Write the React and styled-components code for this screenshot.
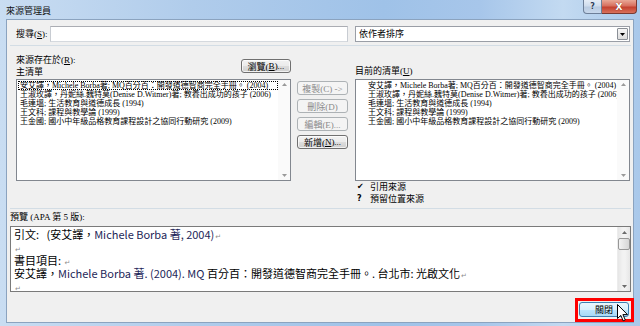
import React from "react";
import styled, { createGlobalStyle } from "styled-components";

const GlobalStyle = createGlobalStyle`
  html, body { margin: 0; padding: 0; background: #ffffff; }
  body { width: 640px; height: 326px; overflow: hidden; }
`;

const UI_FONT = `"Liberation Serif", "Noto Sans CJK TC", serif`;
const DOC_FONT = `"Noto Sans CJK TC", "Liberation Sans", sans-serif`;

const Frame = styled.div`
  position: relative;
  width: 640px;
  height: 326px;
  box-sizing: border-box;
  display: flex;
  flex-direction: column;
  padding: 0 6px 3px 6px;
  background: linear-gradient(to right, #c9ddf2 0%, #b0cceb 30%, #9fc2e8 60%, #a7c6ea 75%, #c3daf1 88%, #a9c8ea 100%);
  font-family: ${UI_FONT};
  font-size: 9px;
  color: #000;
`;

const TitleBar = styled.div`
  height: 19px;
  flex: none;
  display: flex;
  justify-content: space-between;
  align-items: flex-start;
`;

const TitleText = styled.div`
  font-family: ${DOC_FONT};
  font-size: 9px;
  line-height: 19px;
  padding-top: 1px;
  color: #111;
`;

const Caption = styled.div`
  display: flex;
  margin-right: -3px;
`;

const CaptionButton = styled.div`
  height: 14px;
  width: ${(p) => (p.$close ? "35px" : "19px")};
  box-sizing: border-box;
  display: flex;
  align-items: center;
  justify-content: center;
  border: 1px solid ${(p) => (p.$close ? "#7a3a32" : "#6d7f98")};
  border-top: none;
  border-left: ${(p) => (p.$close ? "none" : undefined)};
  border-radius: ${(p) => (p.$close ? "0 0 4px 0" : "0 0 0 4px")};
  background: ${(p) =>
    p.$close
      ? "linear-gradient(to bottom, #e9a896 0%, #d7705f 45%, #c4412f 55%, #d8715c 100%)"
      : "linear-gradient(to bottom, #e4ecf6 0%, #cfdcec 45%, #b9cbe1 55%, #c8d8ec 100%)"};
  color: ${(p) => (p.$close ? "#fff" : "#2c3d58")};
  font-family: "DejaVu Sans", sans-serif;
  font-weight: bold;
  font-size: ${(p) => (p.$close ? "9px" : "8px")};
  text-shadow: ${(p) => (p.$close ? "0 0 1px #5a1a12" : "0 0 1px #fff")};
`;

const Client = styled.div`
  flex: 1;
  display: flex;
  flex-direction: column;
  background: #f0f0f0;
  border: 1px solid #8ba3bf;
`;

const SearchRow = styled.div`
  display: flex;
  align-items: center;
  margin-top: 6px;
  padding: 0 2px 0 9px;
  height: 16px;
`;

const Label = styled.span`
  white-space: nowrap;
  line-height: 12px;
  width: ${(p) => p.$w || "auto"};
  flex: none;
`;

const TextBox = styled.div`
  width: 298px;
  height: 16px;
  box-sizing: border-box;
  background: #fff;
  border: 1px solid #abadb3;
  border-bottom-color: #d5d9de;
  border-left-color: #c8ccd2;
  border-right-color: #c8ccd2;
`;

const Combo = styled.div`
  margin-left: 7px;
  width: 275px;
  height: 16px;
  box-sizing: border-box;
  background: #fff;
  border: 1px solid #9a9ea6;
  display: flex;
  align-items: center;
  justify-content: space-between;
  padding-left: 3px;
`;

const ComboArrow = styled.div`
  width: 11px;
  height: 12px;
  margin-right: 1px;
  box-sizing: border-box;
  border: 1px solid #8a8f96;
  border-radius: 1px;
  background: linear-gradient(to bottom, #f6f6f6, #dcdcdc);
  display: flex;
  align-items: center;
  justify-content: center;
`;

const Separator = styled.div`
  height: 1px;
  margin: ${(p) => p.$top || "3px"} 2px 0 3px;
  background: #d3dde5;
  flex: none;
`;

const MainGrid = styled.div`
  display: grid;
  grid-template-columns: 275px 52px 275px;
  column-gap: 6px;
  padding: 0 2px 0 9px;
`;

const Column = styled.div`
  display: flex;
  flex-direction: column;
`;

const Header = styled.div`
  height: 33px;
  display: flex;
  justify-content: space-between;
  align-items: flex-end;
`;

const HeaderLabels = styled.div`
  display: flex;
  flex-direction: column;
  margin-bottom: ${(p) => p.$mb || "1px"};
`;

const Button = styled.div`
  width: ${(p) => p.$w || "51px"};
  height: 14px;
  box-sizing: border-box;
  display: flex;
  align-items: center;
  justify-content: center;
  border-radius: 3px;
  border: 1px solid ${(p) => (p.$disabled ? "#adb2b5" : "#707070")};
  background: ${(p) =>
    p.$disabled
      ? "#f4f4f4"
      : "linear-gradient(to bottom, #f2f2f2 0%, #ebebeb 50%, #dddddd 51%, #cfcfcf 100%)"};
  color: ${(p) => (p.$disabled ? "#8a8a8a" : "#000")};
  white-space: nowrap;
  font-size: 9px;
  margin-bottom: ${(p) => p.$mb || "0"};
  box-shadow: inset 0 0 0 1px ${(p) => (p.$disabled ? "transparent" : "rgba(255,255,255,0.7)")};
`;

const ListBox = styled.div`
  height: 102px;
  box-sizing: border-box;
  border: 1px solid #82878f;
  background: #fff;
  display: flex;
`;

const ListItems = styled.div`
  flex: 1;
  min-width: 0;
  overflow: hidden;
  padding: 1px 0 0 ${(p) => p.$indent || "1px"};
`;

const ListItem = styled.div`
  font-family: ${UI_FONT};
  font-size: 8px;
  line-height: 9px;
  height: 9px;
  white-space: nowrap;
  padding-left: 2px;
  outline: ${(p) => (p.$focus ? "1px dotted #000" : "none")};
  outline-offset: -1px;
`;

const ListScroll = styled.div`
  width: 12px;
  flex: none;
  display: flex;
  flex-direction: column;
  justify-content: space-between;
  align-items: center;
  padding: 3px 0;
  background: #fafafa;
`;

const ButtonColumn = styled.div`
  display: flex;
  flex-direction: column;
  gap: 4px;
  padding-top: 35px;
`;

const Legend = styled.div`
  display: flex;
  flex-direction: column;
  padding-left: 2px;
`;

const LegendRow = styled.div`
  display: flex;
  align-items: center;
  height: 12px;
  line-height: 12px;
  font-family: ${DOC_FONT};
`;

const LegendMark = styled.span`
  width: 13px;
  font-family: "DejaVu Sans", sans-serif;
  font-weight: bold;
  font-size: 8px;
`;

const PreviewLabel = styled.div`
  margin: 2px 0 3px 3px;
  line-height: 12px;
`;

const PreviewBox = styled.div`
  height: 66px;
  margin: 0 2px 0 3px;
  box-sizing: border-box;
  border: 1px solid #7a7a7a;
  background: #fff;
  display: flex;
`;

const PreviewText = styled.div`
  flex: 1;
  padding: 1px 0 0 3px;
  font-family: ${DOC_FONT};
  font-size: 11px;
  line-height: 13px;
  color: #000;
  overflow: hidden;
`;

const Line = styled.div`
  height: 13px;
  white-space: nowrap;
`;

const Latin = styled.span`
  color: #1d2658;
`;

const Mark = styled.span`
  color: #8c8c8c;
  font-family: "DejaVu Sans", sans-serif;
  font-size: 7px;
  line-height: 7px;
  margin-left: 1px;
`;

const VScroll = styled.div`
  width: 12px;
  flex: none;
  display: flex;
  flex-direction: column;
  background: linear-gradient(to right, #e6e6e6, #f2f2f2 40%, #f2f2f2 60%, #e6e6e6);
  border-left: 1px solid #ececec;
`;

const ScrollArrow = styled.div`
  height: 10px;
  display: flex;
  align-items: center;
  justify-content: center;
`;

const Thumb = styled.div`
  height: 12px;
  margin: 1px 0 0 0;
  box-sizing: border-box;
  border: 1px solid #979797;
  border-radius: 2px;
  background: linear-gradient(to right, #f3f3f3, #e4e4e4 50%, #d6d6d6);
`;

const Track = styled.div`
  flex: 1;
`;

const Footer = styled.div`
  display: flex;
  justify-content: flex-end;
  padding: 6px 0 0 0;
  margin-right: -1px;
`;

const Highlight = styled.div`
  border: 3px solid #ff0000;
  padding: 1px 2px 2px 1px;
`;

const CloseButton = styled.div`
  width: 50px;
  height: 15px;
  box-sizing: border-box;
  display: flex;
  align-items: center;
  justify-content: center;
  border: 1px solid #3c7fb1;
  border-radius: 3px;
  background: linear-gradient(to bottom, #eaf6fd 0%, #d9f0fc 50%, #bee6fd 51%, #a7d9f5 100%);
  font-size: 9px;
`;

const Cursor = styled.svg`
  position: absolute;
  left: 617px;
  top: 304px;
`;

const U = styled.span`
  text-decoration: underline;
`;

function Tri({ down, color = "#6b6b6b" }) {
  return (
    <svg width="5" height="3" viewBox="0 0 5 3">
      <polygon points={down ? "0,0 5,0 2.5,3" : "0,3 5,3 2.5,0"} fill={color} />
    </svg>
  );
}

const sources = [
  "安艾譯，Michele Borba著; MQ百分百：開發道德智商完全手冊。 (2004)",
  "王淑玫譯，丹妮絲.魏特莫(Denise D.Witmer)著; 教養出成功的孩子 (2006)",
  "毛連塭; 生活教育與道德成長 (1994)",
  "王文科; 課程與教學論 (1999)",
  "王金國; 國小中年級品格教育課程設計之協同行動研究 (2009)",
];

function SourceList({ indent, focusFirst }) {
  return (
    <ListBox>
      <ListItems $indent={indent}>
        {sources.map((text, i) => (
          <ListItem key={i} $focus={focusFirst && i === 0}>
            {text}
          </ListItem>
        ))}
      </ListItems>
      <ListScroll>
        <Tri color="#9a9a9a" />
        <Tri down color="#9a9a9a" />
      </ListScroll>
    </ListBox>
  );
}

export default function App() {
  return (
    <>
      <GlobalStyle />
      <Frame>
        <TitleBar>
          <TitleText>來源管理員</TitleText>
          <Caption>
            <CaptionButton>?</CaptionButton>
            <CaptionButton $close>X</CaptionButton>
          </Caption>
        </TitleBar>
        <Client>
          <SearchRow>
            <Label $w="34px">
              搜尋(<U>S</U>):
            </Label>
            <TextBox />
            <Combo>
              <Label>依作者排序</Label>
              <ComboArrow>
                <Tri down color="#000" />
              </ComboArrow>
            </Combo>
          </SearchRow>
          <Separator />
          <MainGrid>
            <Column>
              <Header>
                <HeaderLabels>
                  <Label>
                    來源存在於(<U>R</U>):
                  </Label>
                  <Label>主清單</Label>
                </HeaderLabels>
                <Button $w="50px" $mb="6px">
                  瀏覽(<U>B</U>)...
                </Button>
              </Header>
              <SourceList indent="1px" focusFirst />
            </Column>
            <ButtonColumn>
              <Button $disabled>複製(C) -&gt;</Button>
              <Button $disabled>刪除(D)</Button>
              <Button $disabled>編輯(E)...</Button>
              <Button>
                新增(<U>N</U>)...
              </Button>
            </ButtonColumn>
            <Column>
              <Header>
                <HeaderLabels $mb="2px">
                  <Label>
                    目前的清單(<U>U</U>)
                  </Label>
                </HeaderLabels>
              </Header>
              <SourceList indent="10px" />
              <Legend>
                <LegendRow>
                  <LegendMark>✔</LegendMark>引用來源
                </LegendRow>
                <LegendRow>
                  <LegendMark>?</LegendMark>預留位置來源
                </LegendRow>
              </Legend>
            </Column>
          </MainGrid>
          <Separator $top="3px" />
          <PreviewLabel>預覽 (APA 第 5 版):</PreviewLabel>
          <PreviewBox>
            <PreviewText>
              <Line>
                引文:&nbsp;&nbsp; (安艾譯，<Latin>Michele Borba 著, 2004)</Latin>
                <Mark>↵</Mark>
              </Line>
              <Line>
                <Mark>↵</Mark>
              </Line>
              <Line>
                書目項目: <Mark>↵</Mark>
              </Line>
              <Line>
                安艾譯，<Latin>Michele Borba 著. (2004). MQ</Latin> 百分百：開發道德智商完全手冊。. 台北市: 光啟文化
                <Mark>↵</Mark>
              </Line>
              <Line>
                <Mark>↵</Mark>
              </Line>
            </PreviewText>
            <VScroll>
              <ScrollArrow>
                <Tri />
              </ScrollArrow>
              <Thumb />
              <Track />
              <ScrollArrow>
                <Tri down />
              </ScrollArrow>
            </VScroll>
          </PreviewBox>
          <Footer>
            <Highlight>
              <CloseButton>關閉</CloseButton>
            </Highlight>
          </Footer>
        </Client>
        <Cursor width="12" height="18" viewBox="0 0 12 18">
          <polygon
            points="0.5,0.5 0.5,14.5 3.8,11.4 6.2,16.8 8.3,15.9 5.9,10.6 10.5,10.6"
            fill="#fff"
            stroke="#000"
            strokeWidth="1"
            strokeLinejoin="round"
          />
        </Cursor>
      </Frame>
    </>
  );
}
